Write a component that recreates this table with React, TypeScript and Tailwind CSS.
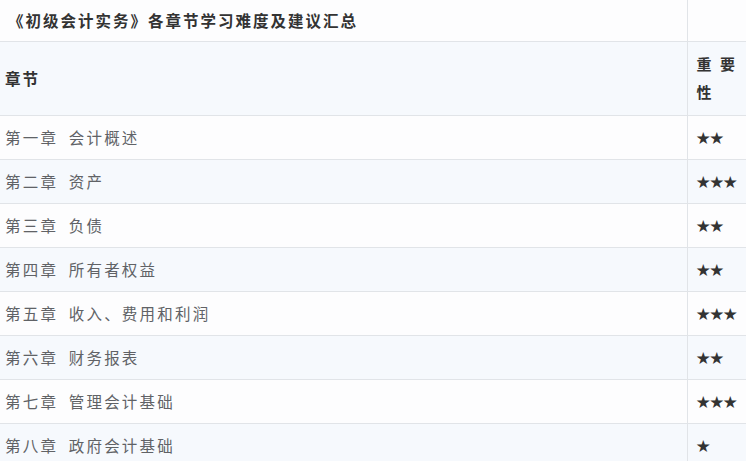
const rows: [string, string][] = [
  ["第一章 会计概述", "★★"],
  ["第二章 资产", "★★★"],
  ["第三章 负债", "★★"],
  ["第四章 所有者权益", "★★"],
  ["第五章 收入、费用和利润", "★★★"],
  ["第六章 财务报表", "★★"],
  ["第七章 管理会计基础", "★★★"],
  ["第八章 政府会计基础", "★"],
];

const font = { fontFamily: '"Noto Sans CJK SC", "Noto Sans", sans-serif' };

export default function App() {
  return (
    <div className="w-[746px] h-[461px] overflow-hidden bg-white" style={font}>
      <table className="w-[746px] table-fixed border-collapse text-[15.5px] tracking-[2px] leading-[28px]">
        <colgroup>
          <col className="w-[687px]" />
          <col className="w-[59px]" />
        </colgroup>
        <tbody>
          <tr className="bg-[#fdfdfe] h-[41px]">
            <td className="pl-[8px] border-r border-b border-[#e1e4e8] font-bold text-[#333]">
              《初级会计实务》各章节学习难度及建议汇总
            </td>
            <td className="border-b border-[#e1e4e8]"></td>
          </tr>
          <tr className="bg-[#f6f9fd] h-[74px]">
            <td className="pl-[5px] border-r border-b border-[#e1e4e8] font-bold text-[#333]">
              章节
            </td>
            <td className="pl-[9px] pr-[9px] border-b border-[#e1e4e8] font-bold text-[#333] text-justify text-[15px]">
              重要性
            </td>
          </tr>
          {rows.map(([name, stars], i) => (
            <tr
              key={name}
              className={`h-[44px] ${i % 2 === 1 ? "bg-[#f6f9fd]" : "bg-[#fdfdfe]"}`}
            >
              <td className="pl-[5px] border-r border-b border-[#e1e4e8] text-[#606266] tracking-[2.2px] [word-spacing:5px]">
                {name}
              </td>
              <td className="pl-[9px] border-b border-[#e1e4e8] text-[#333] tracking-normal text-[13.5px]">
                {stars}
              </td>
            </tr>
          ))}
        </tbody>
      </table>
    </div>
  );
}
